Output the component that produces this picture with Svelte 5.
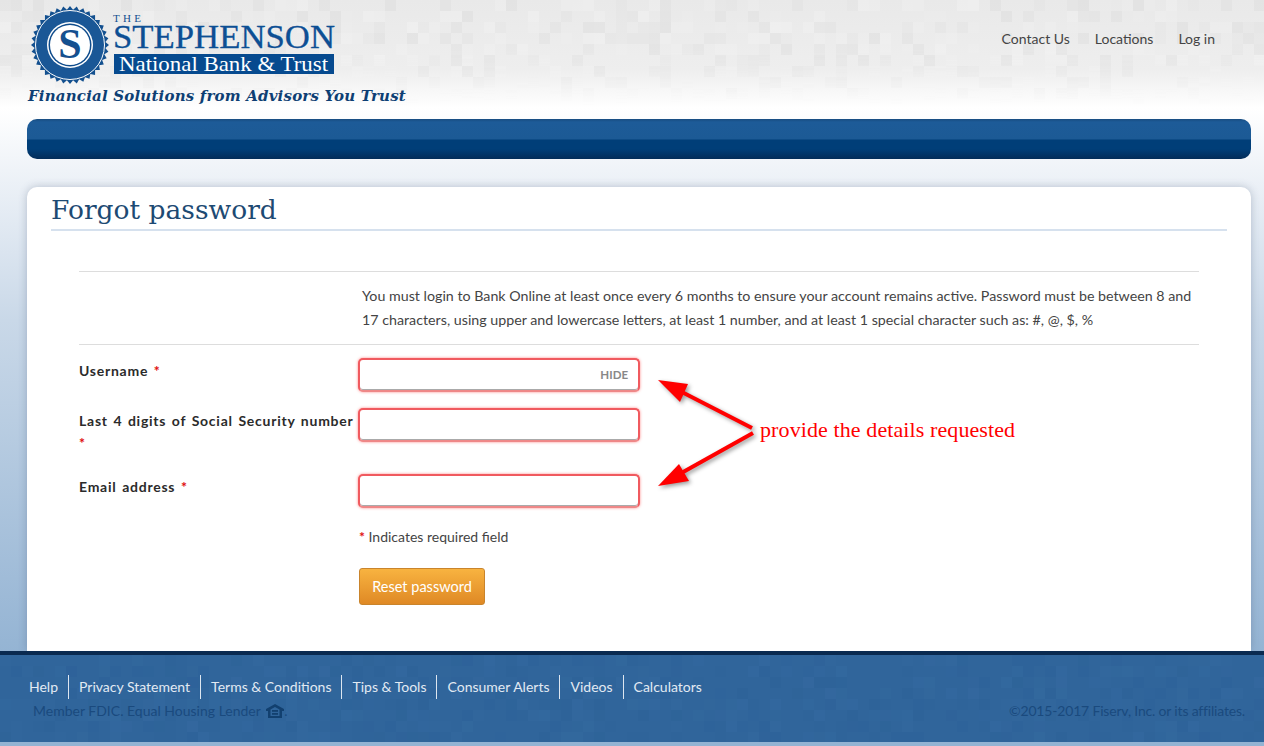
<script>
	const topLinks = ['Contact Us', 'Locations', 'Log in'];
	const footerLinks = ['Help', 'Privacy Statement', 'Terms & Conditions', 'Tips & Tools', 'Consumer Alerts', 'Videos', 'Calculators'];

	// small seeded generator so the tile texture stays the same between loads
	function makeTiles(width, height, seed) {
		const tiles = [];
		let n = seed;
		const next = () => {
			n = (n * 16807) % 2147483647;
			return n / 2147483647;
		};
		for (let y = 0; y < height; y += 11) {
			for (let x = 0; x < width; x += 11) {
				if (next() < 0.45) tiles.push({ x, y, light: next() > 0.5, o: 0.2 + next() * 0.5 });
			}
		}
		return tiles;
	}

	const headerTiles = makeTiles(1264, 110, 77);
	const footerTiles = makeTiles(1264, 87, 4242);

	// sawtooth edge of the logo seal
	const seal = Array.from({ length: 72 }, (_, i) => {
		const a = (i / 72) * Math.PI * 2;
		const r = i % 2 ? 35.5 : 39;
		return `${(39 + r * Math.cos(a)).toFixed(2)},${(39 + r * Math.sin(a)).toFixed(2)}`;
	}).join(' ');
</script>

<div class="page">
	<svg class="tiles head-tiles" width="1264" height="110" aria-hidden="true">
		{#each headerTiles as t}
			<rect x={t.x} y={t.y} width="11" height="11" fill={t.light ? '#f8f8f8' : '#d4d4d4'} opacity={t.o * 0.45} />
		{/each}
	</svg>

	<header class="top">
		<div class="brand">
			<svg class="logo" width="310" height="80" viewBox="0 0 310 80" role="img" aria-label="The Stephenson National Bank & Trust">
				<polygon points={seal} fill="#13508f" />
				<circle cx="39" cy="39" r="34.5" fill="#1a5796" stroke="#fff" stroke-width="1" />
				<circle cx="39" cy="39" r="23" fill="#fff" />
				<circle cx="39" cy="39" r="21.5" fill="#0f4c8c" />
				<circle cx="39" cy="39" r="20" fill="#fff" />
				<text x="39" y="52" class="seal-s" text-anchor="middle">S</text>
				<text x="82" y="16" class="the" textLength="28">THE</text>
				<text x="82" y="42" class="name" textLength="222" lengthAdjust="spacingAndGlyphs">STEPHENSON</text>
				<rect x="83" y="48" width="220" height="20" fill="#064a8f" />
				<text x="88" y="65" class="bank" textLength="209" lengthAdjust="spacingAndGlyphs">National Bank &amp; Trust</text>
			</svg>
			<div class="tagline">Financial Solutions from Advisors You Trust</div>
		</div>
		<nav class="top-links">
			{#each topLinks as link}
				<span>{link}</span>
			{/each}
		</nav>
	</header>

	<div class="navbar"></div>

	<main class="card">
		<h1>Forgot password</h1>

		<div class="form">
			<div class="intro">
				You must login to Bank Online at least once every 6 months to ensure your account remains active. Password must be between 8 and 17 characters, using upper and lowercase letters, at least 1 number, and at least 1 special character such as: #, @, $, %
			</div>

			<div class="row first">
				<label for="username">Username <b>*</b></label>
				<div class="field">
					<input id="username" type="text" />
					<span class="hide">HIDE</span>
				</div>
			</div>
			<div class="row second">
				<label for="ssn">Last 4 digits of Social Security number <b>*</b></label>
				<div class="field"><input id="ssn" type="text" /></div>
			</div>
			<div class="row third">
				<label for="email">Email address <b>*</b></label>
				<div class="field"><input id="email" type="text" /></div>
			</div>

			<p class="note"><b>*</b> Indicates required field</p>
			<button class="reset" type="button">Reset password</button>

			<svg class="arrows" width="120" height="120" viewBox="650 375 120 120" aria-hidden="true">
				<path d="M752 428 L676 389" stroke="#f00" stroke-width="4" fill="none" />
				<polygon points="658,380 688,384 680,402" fill="#f00" />
				<path d="M753 433 L676 476" stroke="#f00" stroke-width="4" fill="none" />
				<polygon points="658,486 679,464 689,481" fill="#f00" />
			</svg>
			<div class="annotation">provide the details requested</div>
		</div>
	</main>

	<footer class="foot">
		<svg class="tiles" width="1264" height="87" aria-hidden="true">
			{#each footerTiles as t}
				<rect x={t.x} y={t.y} width="11" height="11" fill={t.light ? '#3a70a6' : '#2a5f96'} opacity={t.o * 0.4} />
			{/each}
		</svg>
		<ul class="foot-links">
			{#each footerLinks as link}
				<li>{link}</li>
			{/each}
		</ul>
		<div class="legal">
			<span class="member">
				Member FDIC. Equal Housing Lender
				<svg width="18" height="14" viewBox="0 0 18 14" aria-hidden="true">
					<path d="M9 0 L18 5 V7 H16 V14 H2 V7 H0 V5 Z M4.5 5.5 V12 H13.5 V5.5 L9 3 Z" fill="#12406f" fill-rule="evenodd" />
					<rect x="6" y="6" width="6" height="1.8" fill="#12406f" />
					<rect x="6" y="9" width="6" height="1.8" fill="#12406f" />
				</svg>.
			</span>
			<span class="copy">©2015-2017 Fiserv, Inc. or its affiliates.</span>
		</div>
	</footer>
</div>

<style>
	:global(body) {
		margin: 0;
		background: #93b3d3;
	}

	.page {
		position: relative;
		width: 1264px;
		height: 746px;
		overflow: hidden;
		font-family: Lato, "Open Sans", sans-serif;
		color: #444;
		background: linear-gradient(to bottom, #e9e9e9 0, #eeeeee 70px, #fff 108px, #eff3f8 170px, #c9d8e8 320px, #93b3d3 660px);
	}

	.tiles {
		position: absolute;
		left: 0;
		top: 0;
	}

	.head-tiles {
		-webkit-mask-image: linear-gradient(to bottom, #000 50px, transparent 105px);
		mask-image: linear-gradient(to bottom, #000 50px, transparent 105px);
	}

	.top {
		position: relative;
		display: flex;
		justify-content: space-between;
		height: 119px;
		padding: 0 49px 0 28px;
		box-sizing: border-box;
	}

	.logo {
		display: block;
		margin: 6px 0 0 3px;
	}

	.seal-s {
		font: bold 42px "Liberation Serif", serif;
		fill: #15508f;
	}

	.the {
		font: 11px "Liberation Serif", serif;
		fill: #13508f;
	}

	.name {
		font: 34px "Liberation Serif", serif;
		fill: #0d4f94;
		stroke: #0d4f94;
		stroke-width: 0.3px;
	}

	.bank {
		font: 22px "Liberation Serif", serif;
		fill: #fff;
	}

	.tagline {
		margin-top: 1px;
		font: italic bold 15px/19px "DejaVu Serif", serif;
		letter-spacing: 0.19px;
		color: #0e3f74;
		white-space: nowrap;
	}

	.top-links {
		display: flex;
		gap: 25px;
		padding-top: 30px;
		font-size: 14px;
		line-height: 17px;
		color: #444;
	}

	.navbar {
		position: relative;
		height: 40px;
		margin: 0 13px 0 27px;
		border-radius: 10px;
		background: linear-gradient(to bottom, #184c80 0, #1d5b98 3px, #1c5a95 20px, #003e78 21px, #003e78 30px, #032c58 40px);
	}

	.card {
		position: relative;
		box-sizing: border-box;
		height: 464px;
		margin: 28px 13px 0 27px;
		padding: 0 24px;
		background: #fff;
		border-radius: 10px 10px 0 0;
		box-shadow: 0 0 8px rgba(60, 80, 110, 0.3);
	}

	h1 {
		margin: 0;
		height: 42px;
		border-bottom: 2px solid #d6e1ee;
		font: 400 26.5px/46px "DejaVu Serif", serif;
		color: #1d4a73;
	}

	.form {
		position: relative;
		margin: 40px 28px 0;
		font-size: 13.5px;
	}

	.intro {
		box-sizing: border-box;
		height: 74px;
		padding: 12px 0 0 283px;
		border-top: 1px solid #ddd;
		border-bottom: 1px solid #ddd;
		font-size: 14.25px;
		line-height: 24px;
		color: #444;
	}

	.row {
		display: grid;
		grid-template-columns: 280px 280px;
	}

	.row.first {
		height: 50px;
		margin-top: 14px;
	}

	.row.second {
		height: 66px;
	}

	.row.third {
		height: 50px;
	}

	label {
		padding-top: 1px;
		font-size: 14px;
		font-weight: 700;
		line-height: 22px;
		letter-spacing: 0.75px;
		word-spacing: 1.5px;
		color: #2b2b2b;
	}

	b {
		color: #e01010;
	}

	.field {
		position: relative;
		height: 32px;
	}

	input {
		box-sizing: border-box;
		display: block;
		width: 282px;
		height: 34px;
		margin: -1px 0 0 -1px;
		padding: 0 8px;
		background: #fff;
		border: 2px solid #f05a5f;
		border-bottom-color: #e88;
		border-radius: 5px;
		outline: none;
		box-shadow: 0 0 3px rgba(255, 60, 60, 0.6), inset 0 -1px 0 #aaa;
	}

	.hide {
		position: absolute;
		right: 11px;
		top: 9px;
		font-size: 11.5px;
		font-weight: 700;
		color: #888;
	}

	.note {
		margin: 0 0 0 280px;
		padding-top: 2px;
		font-size: 14px;
		line-height: 20px;
		color: #444;
	}

	.reset {
		display: block;
		width: 126px;
		height: 37px;
		margin: 21px 0 0 280px;
		padding: 0;
		border: 1px solid #c9842c;
		border-radius: 3px;
		background: linear-gradient(to bottom, #f8b340, #df8925);
		color: #fff;
		font: 14.5px Lato, sans-serif;
	}

	.arrows {
		position: absolute;
		left: 571px;
		top: 104px;
		filter: drop-shadow(2px 2px 2px rgba(0, 0, 0, 0.4));
	}

	.annotation {
		position: absolute;
		left: 681px;
		top: 145px;
		font: 22px/28px "Liberation Serif", serif;
		letter-spacing: 0.1px;
		color: #f00;
		white-space: nowrap;
	}

	.foot {
		position: relative;
		box-sizing: border-box;
		height: 91px;
		border-top: 4px solid #0a2a50;
		background: #30659b;
	}

	.foot-links {
		position: relative;
		display: flex;
		margin: 0;
		padding: 20px 0 0 19px;
		list-style: none;
	}

	.foot-links li {
		padding: 0 10px;
		border-left: 1px solid #dde6f0;
		font-size: 14px;
		line-height: 24px;
		color: #e2eaf3;
	}

	.foot-links li:first-child {
		border-left: 0;
	}

	.legal {
		position: relative;
		display: flex;
		justify-content: space-between;
		padding: 0 19px 0 33px;
		font-size: 14px;
		line-height: 24px;
		color: #1a4a7e;
	}

	.copy {
		letter-spacing: -0.18px;
	}

	.member svg {
		margin-left: 2px;
		vertical-align: -2px;
	}
</style>
